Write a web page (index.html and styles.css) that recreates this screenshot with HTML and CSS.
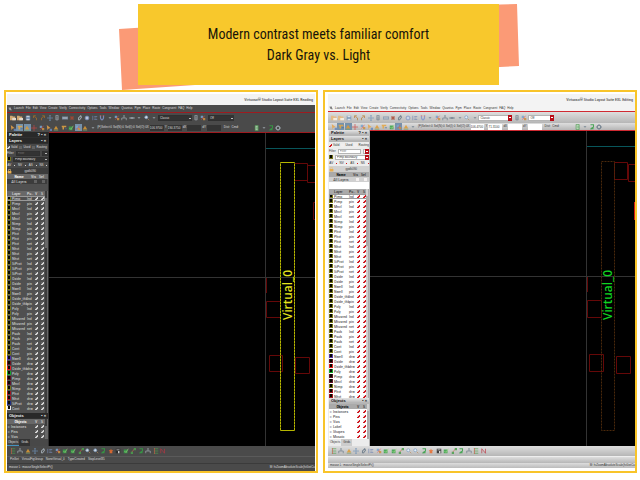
FILE: index.html
```
<!DOCTYPE html>
<html lang="en">
<head>
<meta charset="utf-8">
<title>Dark Gray vs. Light</title>
<link rel="stylesheet" href="styles.css">
</head>
<body>
<header class="banner">
  <svg class="banner-back" viewBox="0 0 640 92" aria-hidden="true">
    <path fill="#fb9a76" d="M119 29 150 27 195 85 122 90zM480 5 517 4 519 66 480 68z"/>
  </svg>
  <h1 class="banner-title">Modern contrast meets familiar comfort<br>Dark Gray vs. Light</h1>
</header>
<main class="compare">
  <section class="frame frame-dark" id="dark" aria-label="Dark gray theme"></section>
  <section class="frame frame-light" id="light" aria-label="Light theme"></section>
</main>
<script src="app.js"></script>
</body>
</html>
```
FILE: styles.css
```
* { box-sizing: border-box; }
body {
  margin: 0;
  height: 100vh;
  display: flex;
  flex-direction: column;
  background: #fff;
  font-family: "Liberation Sans", sans-serif;
}
.banner { position: relative; flex: none; height: 90px; padding: 4px 3px 0 0; }
.banner-back { position: absolute; left: 0; top: 0; width: 100%; }
.banner-title {
  position: relative;
  margin: 0 auto;
  width: 361px;
  height: 81px;
  padding-top: 20px;
  background: #f8c82c;
  color: #17140a;
  font-family: "Roboto Condensed", "Liberation Sans", sans-serif;
  font-size: 14px;
  line-height: 21px;
  font-weight: 400;
  text-align: center;
}
.compare {
  position: relative;
  flex: 1;
  min-height: 0;
  display: grid;
  grid-template-columns: minmax(0, 1fr) minmax(0, 1fr);
  grid-template-rows: minmax(0, 1fr);
  gap: 5px;
  padding: 0 3px 7px 4px;
}
.frame { display: flex; flex-direction: column; min-height: 0; border: 2px solid #f8c42a; background: #fff; font-size: 3px; line-height: 5px; }
.frame > * { flex: none; }
.frame-dark {
  padding: 2px 1px 0;
  --bar: #4a4a4a; --menu: #4b4b4b; --ink: #dedede; --line: #9e1b20; --panel: #484848; --list: #505050;
  --head: #292929; --headink: #f2f2f2; --field: #333; --th: #686868; --edge: #303030; --tick: #d4d4d4;
  --box: #626262; --btn: #3c3c3c; --icon: #a9b3bb; --arrow: #bbb; --drop: #333;
}
.frame-light {
  padding: 2px 0 0 3px;
  --bar: linear-gradient(#dedede, #b6b6b6); --menu: #f3f3f3; --ink: #333; --line: #d02a32; --panel: #ececec; --list: #fff;
  --head: linear-gradient(#e4e4e4, #b2b2b2); --headink: #111; --field: #fff; --th: #aaa; --edge: #b5b5b5; --tick: #d01820;
  --box: #f2eeee; --btn: #d0d0d0; --icon: #687988; --arrow: #fff; --drop: #b80e18;
}
.title { height: 11px; margin: 0; padding-right: 2px; background: #f3f3f3; color: #222; text-align: right; line-height: 11px; font-family: "Roboto Condensed", "Liberation Sans", sans-serif; font-size: 4px; font-weight: 400; white-space: nowrap; }
.menu { display: flex; align-items: center; gap: 2px; height: 8px; padding-left: 1px; background: var(--menu); border-bottom: 1px solid var(--line); color: var(--ink); }
.frame-light .menu { height: 7px; }
.menu .icon { width: 4px; height: 6px; }
.menu a { color: inherit; text-decoration: none; }
.bar { display: flex; align-items: center; height: 10px; background: var(--bar); color: var(--ink); }
.bar.second { height: 9px; }
.frame-light .bar { height: 11px; }
.frame-light .bar.second { height: 7px; }
.tools { display: grid; grid-auto-flow: column; grid-auto-columns: minmax(0, 1fr); justify-items: center; padding-left: 2px; flex: 0 0 49%; }
.bar.second .tools { flex-basis: 29%; }
.foot .tools { flex-basis: 52%; }
.tool { width: 7px; height: 7px; padding: 0; border: 0; background: none; color: var(--icon); display: block; flex: none; }
.tool.on { background: #7592ac; }
.icon { display: block; width: 7px; height: 7px; }
.tool .icon { width: 6px; height: 6px; margin: auto; opacity: .85; }
select, input { font: inherit; color: inherit; }
select, input[type="text"] { appearance: none; border: 1px solid var(--edge); border-radius: 0; background: var(--field); height: 6px; line-height: 4px; padding: 0 1px; margin: 0; min-width: 0; }
.pick { display: flex; position: relative; height: 6px; flex: 0 0 34px; margin-right: 1px; }
.pick.short { flex-basis: 26px; margin-left: 1px; }
.pick select { width: 100%; }
.pick::after { content: ""; position: absolute; right: 0; top: 0; width: 4px; height: 6px; background: linear-gradient(var(--arrow), var(--arrow)) center / 2px 1px no-repeat var(--drop); }
.counts { display: flex; gap: 1px; padding-left: 1px; white-space: nowrap; flex: 0 0 50px; }
.coords { display: flex; align-items: center; gap: 1px; flex: 0 0 74px; }
.coords input[type="text"] { flex: 1 1 0; width: 0; padding: 0; border-width: 0; }
.cmd { flex: 0 0 33px; padding-left: 3px; white-space: nowrap; }
.frame > .work { flex: 1; display: flex; min-height: 0; }
.dock { flex: 0 0 42px; display: flex; flex-direction: column; background: var(--panel); color: var(--ink); border-right: 1px solid var(--edge); overflow: hidden; min-width: 0; }
.frame-light .dock { padding-left: 1px; }
.dock-head { display: flex; justify-content: space-between; flex: none; height: 6px; margin: 0; padding: 0 2px; background: var(--head); color: var(--headink); font-size: 4px; line-height: 5px; font-weight: 700; border-bottom: 1px solid var(--edge); }
.row { display: flex; align-items: center; gap: 2px; height: 6px; flex: none; white-space: nowrap; }
.row label { display: flex; align-items: center; gap: 1px; }
.row .pick { flex: 1; height: 5px; margin: 0; }
.row .pick.mini { flex: 0 0 6px; }
.row .pick select, .row input[type="text"] { height: 5px; line-height: 3px; flex: 1; width: 0; }
.row .pick::after { height: 5px; }
.avs { justify-content: space-around; }
.avs i { width: 1px; height: 1px; background: var(--tick); }
.tech { justify-content: space-between; padding-right: 12px; background: var(--btn); }
.tech .icon { width: 5px; height: 6px; }
input[type="checkbox"] { appearance: none; flex: none; width: 3px; height: 3px; margin: 0; background: var(--box); }
input[type="checkbox"]:checked { background: linear-gradient(135deg, var(--box) 35%, var(--tick) 35% 80%, var(--box) 80%); }
table, thead, tbody { display: block; }
table { font-family: "Roboto Condensed", "Liberation Sans", sans-serif; font-size: 4px; }
tr { display: grid; align-items: center; }
th, td { padding: 0; font-weight: inherit; text-align: left; white-space: nowrap; line-height: 5px; height: 5px; }
td.c, th.c { display: flex; align-items: center; justify-content: center; }
.groups { flex: none; height: 17px; background: var(--list); }
.groups tr, .layers thead tr, .objects thead tr { height: 5px; }
.groups tr { grid-template-columns: 24px 8px 8px; }
thead { background: var(--th); color: var(--headink); }
.groups td { background: var(--btn); text-align: center; }
.groups thead th:first-child { text-align: center; font-weight: 700; }
.scroll { flex: 1; min-height: 0; overflow: hidden; display: flex; background: var(--list); }
.scroll table { flex: 1; min-width: 0; }
.track { flex: none; width: 3px; background: var(--btn); border-right: 1px solid var(--th); }
.track i { display: block; margin-top: 7px; height: 50px; background: var(--th); }
.layers tbody { display: grid; grid-template-rows: repeat(43, 1fr); height: 213px; }
.layers tr { grid-template-columns: 5px 15px 6px 6px 6px; }
.layers tbody tr:first-child { outline: 1px solid #999; outline-offset: -1px; }
.swatch { display: block; flex: none; width: 4px; height: 4px; background: #090900; border: 1px solid var(--sw); border-width: 0 1px 1px; }
.objects-list { flex: none; height: 20px; display: flex; overflow: hidden; background: var(--list); }
.frame-light .objects-list { height: 35px; }
.objects-list table { flex: 1; }
.objects-list tr { grid-template-columns: 25px 6px 6px; padding-left: 1px; }
.objects-list thead th:first-child { text-align: center; font-weight: 700; }
.tabs { display: flex; flex: none; height: 7px; }
.tabs button { font: inherit; color: inherit; border: 0; padding: 0 1px; background: var(--panel); }
.tabs button + button { background: var(--field); padding: 0 2px; }
.frame-dark .tabs button:first-child { border-bottom: 1px solid #4591bd; }
.frame-light .tabs button + button { background: #ccc; }
.canvas { flex: 1; min-width: 0; background: #000; border-top: 1px solid var(--line); position: relative; }
.canvas svg { position: absolute; inset: 0; width: 100%; height: 100%; }
.canvas text { font: 500 12px "Noto Sans", "Open Sans", sans-serif; }
.bar.foot, .frame-light .bar.foot { height: 10px; }
.info { display: flex; gap: 3px; height: 7px; padding: 0 3px; background: var(--bar); color: var(--ink); border-top: 1px solid #5a5a5a; white-space: nowrap; }
.frame-light .info { border-top-color: #eee; }
.status { display: flex; justify-content: space-between; height: 8px; padding-left: 2px; color: var(--ink); background: var(--bar); border-top: 1px solid #3b3b3b; white-space: nowrap; line-height: 6px; }
.frame-light .status { border: 0; background: linear-gradient(#ddd, #bbb) top / 100% 5px no-repeat #fff; line-height: 5px; }
```
FILE: app.js
```
const icons = {
  folder: '<path fill="#e9b97b" d="M0 1h3l1 1h3v5H0z"/><path fill="#fff4e3" d="M3 4h5v3H3z"/>',
  save: '<path fill="#6f8fb5" d="M1 1h6v6H1z"/><path fill="#dce4ee" d="M2 1h4v2H2zM2 5h4v2H2z"/>',
  undo: '<path fill="none" stroke="#b87524" d="M6 7V4L3 2M2 4V1h3"/>',
  redo: '<path fill="none" stroke="#b87524" d="M2 7V4l3-2M6 4V1H3"/>',
  move: '<path fill="none" stroke="#7193b8" d="M4 0v8M0 4h8M3 1h2M3 7h2"/>',
  copy: '<path fill="none" stroke="currentColor" d="M2.5.5h3v6h-3zM4 2v4"/>',
  stretch: '<path fill="#8193a8" d="M0 2h8v4H0z"/><path stroke="#dbe4ed" d="M1 4h6"/>',
  del: '<path stroke="#aa4a35" stroke-width="2" d="M2 2l4 4M6 2L2 6"/>',
  link: '<path fill="none" stroke="currentColor" stroke-width="1.4" d="M2 7V4l3-3 1 2-3 4"/>',
  info: '<circle cx="4" cy="4" r="2.6" fill="#cad7ef" stroke="#7188be"/>',
  align: '<path stroke="#7589b4" d="M1 1v6M3 2h4M3 4h3M3 6h4"/>',
  magnet: '<path fill="none" stroke="#8295ce" stroke-width="1.6" d="M2 1v3q2 5 4 0V1"/><path stroke="#d66" d="M1 1h2M5 1h2"/>',
  dot: '<path fill="currentColor" d="M2 3h4L4 5z"/>',
  tree: '<path fill="none" stroke="currentColor" d="M4 1v3M1 7V4h6v3M3 1h2"/>',
  plug: '<path stroke="currentColor" stroke-width="2" d="M2 4h4"/><path stroke="currentColor" d="M0 4h8"/>',
  zoom: '<circle cx="3" cy="3" r="2" fill="#e8f3ff" stroke="#789cc3"/><path stroke="#b88a58" d="M5 5l2 2"/>',
  pointer: '<path fill="#e8a44a" d="M1 0l5 4-3 1-1 2z"/><path fill="#6788bc" d="M5 5h3v3H5z"/>',
  part: '<path fill="#e5a643" d="M1 1h6v2H4v3H2V3H1z"/><path stroke="#496d91" d="M5 5h3"/>',
  tri: '<path fill="#de9b35" d="M4 1l3 5H1z"/><path stroke="#76a06b" d="M1 7h6"/>',
  cross: '<path fill="none" stroke="#ce4545" d="M4 0v8M0 4h8"/>',
  mix: '<path fill="#74a6cf" d="M1 1h3v3H1z"/><path fill="#cf9040" d="M4 4h3v3H4z"/><path stroke="#d55" d="M2 6l4-5"/>',
  green: '<path fill="#38a449" d="M1 2h5v5H1z"/><path stroke="#9bd77f" d="M2 4l2 2 3-5" fill="none"/>',
  layout: '<path stroke="#4ba34c" d="M1 1h6M1 4h6M1 7h6"/><path stroke="#cc5c48" d="M2 0v8"/>',
  slash: '<path stroke="#d5684b" d="M2 6l4-5"/><path fill="#4aa14d" d="M5 0h3v3H5zM1 5h3v3H1z"/>',
  drc: '<path fill="none" stroke="#35a045" stroke-width="1.4" d="M2 1h4v3L2 7"/><path fill="#35a045" d="M3 5h3v2H3z"/>',
  star: '<path fill="#eb6c2c" d="M4 1l1 2h2L5.500 5 6 7H2l.5-2L1 3h2z"/>',
  mask: '<path fill="#272727" d="M1 1h6v6H1z"/><path fill="#ddd" d="M2 2h4v1H2zM4 4h2v3H4z"/>',
  route: '<path fill="none" stroke="#bc3441" d="M1 7V1l5 6V1"/>',
  gear: '<circle cx="4" cy="4" r="2.400" fill="none" stroke="currentColor" stroke-width="1.500"/><path fill="none" stroke="currentColor" d="M4 0v2M4 6v2M0 4h2M6 4h2"/>',
  page: '<path fill="#cfe6cf" stroke="#459347" d="M1.500.5h4v7h-4z"/><path stroke="#2e9f36" d="M4 2v4"/>'
};
const tool = (name, on) => `<button type="button" class="tool${on ? ' on' : ''}" aria-label="${name}"><svg class="icon" viewBox="0 0 8 8" aria-hidden="true">${icons[name]}</svg></button>`;
const tools = (names, on = []) => `<div class="tools">${names.split(' ').map((n, i) => tool(n, on.includes(i))).join('')}</div>`;
const check = (label, on = true) => `<input type="checkbox" aria-label="${label}"${on ? ' checked' : ''}>`;

const menus = 'Launch File Edit View Create Verify Connectivity Options Tools Window Quantus Pgm Place Route Congruent FAQ Help'.split(' ');
const purposes = ['lnd', 'pin', 'net'];
const yellow = '#77751b';
const layers = [];
[['Pimp', 2], ['Mnvl', 3], ['Nimp', 2], ['Phvt', 3], ['Nhvt', 3], ['SiProt', 3], ['Oxide', 2], ['Nwell', 2], ['Oxide_thk', 2], ['Poly', 2], ['Mtusred', 3], ['Psub', 3], ['Cont', 2]]
  .forEach(([name, n]) => purposes.slice(0, n).forEach(p => layers.push([name, p, yellow])));
[['Nwell', '#5535a5'], ['Oxide', '#681522'], ['Oxide_thk', '#e02020'], ['Poly', '#16a52b'], ['Pimp', '#5c1525'], ['Mnvl', '#63152c'], ['Nimp', '#77751b'], ['Phvt', '#9d1824'], ['Nhvt', '#a31820'], ['SiProt', '#202f83'], ['Cont', '#e8e8e8']]
  .forEach(([name, c]) => layers.push([name, 'drw', c]));

const box = (x, y, w, h) => `M${x} ${y}h${w}v${h}h${-w}z`;
const drawings = {
  dark: `<svg viewBox="49 133 266 313" preserveAspectRatio="xMinYMin slice" role="img" aria-label="Layout canvas">
    <path stroke="#333" d="M265.500 133v313M49 277.500h266"/><path stroke="#08565b" d="M266 148.500h49"/>
    <path fill="none" stroke="#650808" d="${box(294.5, 163.5, 13, 17)}${box(307.5, 165.5, 13, 17)}${box(313.5, 202.5, 9, 17)}M266.500 278v15${box(266.5, 301.5, 14, 16)}${box(269.5, 355.5, 13, 16)}${box(295.5, 357.5, 14, 16)}"/>
    <path fill="none" stroke="#b5b500" d="${box(280.5, 162.5, 14, 268)}"/><path stroke="#000" stroke-dasharray="1 2" stroke-opacity=".4" d="M280.500 163v267M294.500 163v267"/>
    <text fill="#e6e61c" transform="translate(292 320) rotate(-90)">Virtual_0</text></svg>`,
  light: `<svg viewBox="370 131 265 315" preserveAspectRatio="xMinYMin slice" role="img" aria-label="Layout canvas">
    <path stroke="#333" d="M586.500 131v315M370 276.500h265"/><path stroke="#08565b" d="M587 146.500h48"/>
    <path fill="none" stroke="#650808" d="${box(614.5, 162.5, 13, 17)}${box(628.5, 164.5, 13, 17)}M587.500 277v15${box(587.5, 300.5, 14, 17)}${box(589.5, 354.5, 14, 17)}${box(616.5, 356.5, 14, 17)}"/>
    <path stroke="#d51c10" d="M634.500 202v18"/>
    <path fill="none" stroke="#4b290b" stroke-dasharray="2 1" d="${box(601.5, 161.5, 13, 269)}"/>
    <text fill="#10d520" transform="translate(612 320) rotate(-90)">Virtual_0</text></svg>`
};

function render(id, cfg) {
  const objects = cfg.objects.map(o => `<tr><td>▹ ${o}</td><td class="c">${check(o + ' visible')}</td><td class="c">${check(o + ' selectable')}</td></tr>`).join('');
  const rows = layers.slice(0, cfg.rows).map(([n, p, c]) => `<tr><td><span class="swatch" style="--sw:${c}"></span></td><td>${n}</td><td>${p}</td><td class="c">${check(n + ' ' + p + ' visible')}</td><td class="c">${check(n + ' ' + p + ' selectable')}</td></tr>`).join('');
  document.getElementById(id).innerHTML = `
  <h2 class="title">Virtuoso® Studio Layout Suite EXL ${cfg.mode}</h2>
  <nav class="menu"><svg class="icon" viewBox="0 0 8 8" aria-hidden="true"><path fill="none" stroke="currentColor" d="M1 2h5M2 4h4v3M4 2v4"/></svg>${menus.map(m => `<a href="#">${m}</a>`).join('')}</nav>
  <div class="bar">${tools('folder folder save undo redo move copy stretch del link info align magnet dot mix tree plug dot zoom dot')}
    <span class="pick"><select aria-label="Workspace"><option>Classic</option></select></span>${tool('copy')}${tool('mix')}
    <span class="pick short"><select aria-label="Assist"><option>Off</option></select></span></div>
  <div class="bar second">${tools('pointer part tri cross mix pointer tri part green mix tri dot', [1, 2, 9])}
    <div class="counts"><span>(F)Select:0</span><span>Sel(N):0</span><span>Sel(I):0</span><span>Sel(O):0</span></div>
    <div class="coords"><label for="${id}x">X</label><input id="${id}x" type="text" value="${cfg.x}"><label for="${id}y">Y</label><input id="${id}y" type="text" value="${cfg.y}"><label for="${id}dx">dX</label><input id="${id}dx" type="text"><label for="${id}dy">dY</label><input id="${id}dy" type="text"></div>
    <div class="cmd">Dist: &nbsp;Cmd:</div>${tool('page')}${tool('dot')}${tool('drc')}${tool('gear')}</div>
  <div class="work">
    <aside class="dock">
      <h3 class="dock-head"><span>Palette</span><span>? ▪ ×</span></h3>
      <h3 class="dock-head"><span>Layers</span><span>▪ ×</span></h3>
      <div class="row"><label>${check('Valid')}Valid</label><label>${check('Used', false)}Used</label><label>${check('Routing', false)}Routing</label></div>
      <div class="row"><label for="${id}f">Filter</label><input id="${id}f" type="text" placeholder="Filter"><span class="pick mini"><select aria-label="Filter history"><option></option></select></span></div>
      <div class="row"><span class="swatch" style="--sw:${yellow}"></span><span class="pick"><select aria-label="Layer"><option>Pimp boundary</option></select></span></div>
      <div class="row avs"><span>AV</span><i></i><span>NV</span><i></i><span>AS</span><i></i><span>NS</span><i></i></div>
      <div class="row tech"><svg class="icon" viewBox="0 0 8 8" aria-hidden="true"><path fill="#e8ad4d" d="M1 4h6v4H1z"/><path fill="none" stroke="#e8c27d" d="M2.500 4V1.500h3V4"/></svg><span>gpdk090</span></div>
      <table class="groups"><thead><tr><th>Name</th><th>Vis</th><th>Sel</th></tr></thead><tbody><tr><td>All Layers</td><td class="c">${check('All visible', false)}</td><td class="c">${check('All selectable', false)}</td></tr></tbody></table>
      <div class="scroll"><table class="layers"><thead><tr><th></th><th>Layer</th><th>Pu..</th><th class="c">V</th><th class="c">S</th></tr></thead><tbody>${rows}</tbody></table><div class="track"><i></i></div></div>
      <h3 class="dock-head"><span>Objects</span><span>▪ ×</span></h3>
      <div class="objects-list"><table class="objects"><thead><tr><th>Objects</th><th class="c">V</th><th class="c">S</th></tr></thead><tbody>${objects}</tbody></table><div class="track"><i></i></div></div>
      <div class="tabs"><button type="button">Objects</button><button type="button">Grids</button></div>
    </aside>
    <div class="canvas">${drawings[id]}</div>
  </div>
  <div class="bar foot">${tools('layout tree tri move link align mix green green slash zoom zoom drc star mask green slash drc tree layout route')}</div>
  <div class="info">${cfg.info.map(t => `<span>${t}</span>`).join('')}</div>
  <div class="status"><span>mouse L: mouseSingleSelectPt()</span><span>M: hiZoomAbsoluteScale(hiGetCu</span></div>`;
}
render('dark', { mode: 'Reading', rows: 43, x: '106.9700', y: '190.3750', objects: ['Instances', 'Pins', 'Vias'], info: ['PinSet', 'VirtualFigGroup', 'NoneVirtual_0', 'TypeCreated', 'StopLevel35'] });
render('light', { mode: 'Editing', rows: 41, x: '106.4700', y: '71.3100', objects: ['Instances', 'Pins', 'Vias', 'Label', 'Shapes', 'Mosaic'], info: [] });
```
